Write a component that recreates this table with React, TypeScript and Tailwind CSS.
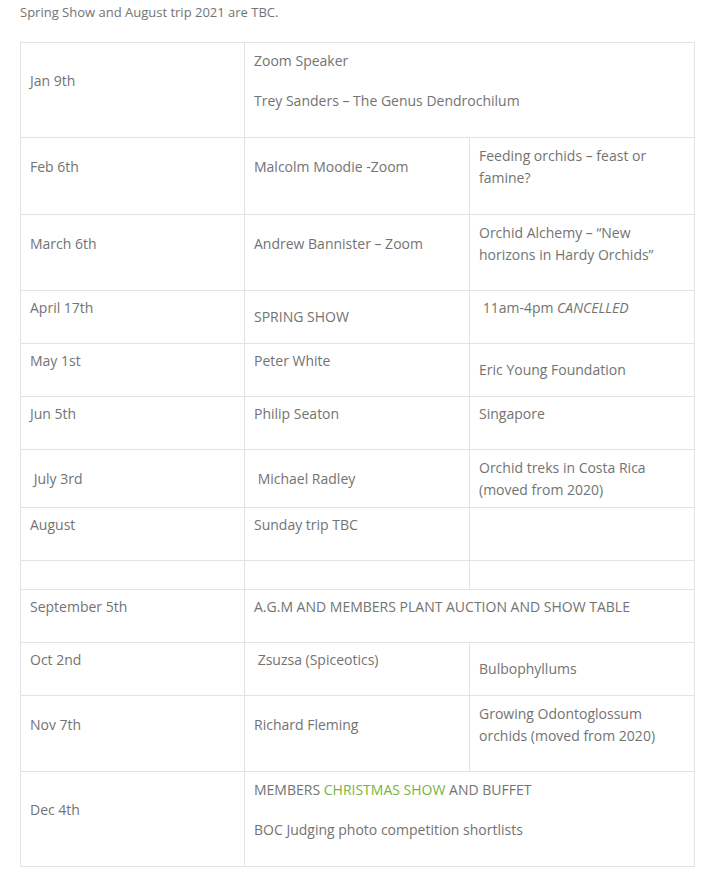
import React from 'react';

type Cell = {
  lines?: React.ReactNode[];
  plain?: React.ReactNode;
  span?: number;
};

type Row = { date: Cell; cells: Cell[]; h: string };

const ROWS: Row[] = [
  {
    h: 'h-[95px]',
    date: { lines: ['Jan 9th'] },
    cells: [{ span: 2, lines: ['Zoom Speaker', 'Trey Sanders – The Genus Dendrochilum'] }],
  },
  {
    h: 'h-[77px]',
    date: { lines: ['Feb 6th'] },
    cells: [
      { lines: ['Malcolm Moodie -Zoom'] },
      { lines: [<>Feeding orchids – feast or<br />famine?</>] },
    ],
  },
  {
    h: 'h-[76px]',
    date: { lines: ['March 6th'] },
    cells: [
      { lines: ['Andrew Bannister – Zoom'] },
      { lines: [<>Orchid Alchemy – “New<br />horizons in Hardy Orchids”</>] },
    ],
  },
  {
    h: 'h-[53px]',
    date: { lines: ['April 17th'] },
    cells: [
      { plain: 'SPRING SHOW' },
      { lines: [<>{'\u00a0'}11am-4pm <em>CANCELLED</em></>] },
    ],
  },
  {
    h: 'h-[53px]',
    date: { lines: ['May 1st'] },
    cells: [{ lines: ['Peter White'] }, { plain: 'Eric Young Foundation' }],
  },
  {
    h: 'h-[53px]',
    date: { lines: ['Jun 5th'] },
    cells: [{ lines: ['Philip Seaton'] }, { lines: ['Singapore'] }],
  },
  {
    h: 'h-[58px]',
    date: { plain: '\u00a0July 3rd' },
    cells: [
      { plain: '\u00a0Michael Radley' },
      { plain: <>Orchid treks in Costa Rica<br />(moved from 2020)</> },
    ],
  },
  {
    h: 'h-[53px]',
    date: { lines: ['August'] },
    cells: [{ lines: ['Sunday trip TBC'] }, {}],
  },
  { h: 'h-[29px]', date: {}, cells: [{}, {}] },
  {
    h: 'h-[53px]',
    date: { lines: ['September 5th'] },
    cells: [{ span: 2, lines: ['A.G.M AND MEMBERS PLANT AUCTION AND SHOW TABLE'] }],
  },
  {
    h: 'h-[53px]',
    date: { lines: ['Oct 2nd'] },
    cells: [{ lines: ['\u00a0Zsuzsa (Spiceotics)'] }, { plain: 'Bulbophyllums' }],
  },
  {
    h: 'h-[76px]',
    date: { lines: ['Nov 7th'] },
    cells: [
      { lines: ['Richard Fleming'] },
      { lines: [<>Growing Odontoglossum<br />orchids (moved from 2020)</>] },
    ],
  },
  {
    h: 'h-[95px]',
    date: { lines: ['Dec 4th'] },
    cells: [
      {
        span: 2,
        lines: [
          <>
            MEMBERS <span className="text-[#7ab33e]">CHRISTMAS SHOW</span> AND BUFFET
          </>,
          'BOC Judging photo competition shortlists',
        ],
      },
    ],
  },
];

const Td: React.FC<{ cell: Cell }> = ({ cell }) => (
  <td
    colSpan={cell.span}
    className="border border-[#e3e3e3] px-[9px] py-[6px] align-middle"
  >
    {cell.lines?.map((l, i) => (
      <p key={i} className="mb-[18px]">
        {l}
      </p>
    ))}
    {cell.plain}
  </td>
);

export default function App() {
  return (
    <div className="min-h-screen bg-white px-5 pt-px text-[14px] leading-[22px] text-[#737373] font-['Open_Sans',sans-serif]">
      <p className="mb-[19px] text-[13px]">Spring Show and August trip 2021 are TBC.</p>
      <table className="w-[674px] table-fixed border-collapse">
        <colgroup>
          <col className="w-[224px]" />
          <col className="w-[225px]" />
          <col className="w-[225px]" />
        </colgroup>
        <tbody>
          {ROWS.map((r, i) => (
            <tr key={i} className={r.h}>
              <Td cell={r.date} />
              {r.cells.map((c, j) => (
                <Td key={j} cell={c} />
              ))}
            </tr>
          ))}
        </tbody>
      </table>
    </div>
  );
}
